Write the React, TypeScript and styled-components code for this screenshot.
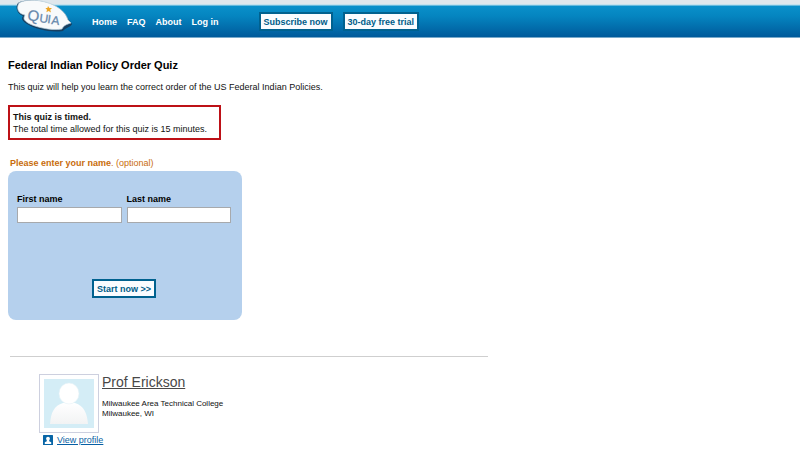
import React from "react";
import styled, { createGlobalStyle } from "styled-components";

const GlobalStyle = createGlobalStyle`
  *, *::before, *::after { box-sizing: border-box; }
  body {
    margin: 0;
    background: #fff;
    color: #111;
    font-family: "Liberation Sans", Arial, Helvetica, sans-serif;
    font-size: 9px;
    line-height: 12px;
  }
`;

const Header = styled.header`
  display: flex;
  align-items: flex-start;
  height: 38px;
  padding-left: 15px;
  border-bottom: 1px solid #78a9ca;
  background: linear-gradient(#dfe7ec 0 4px, #c3e2ee 4px 5px, #0990ca 6px, #0585c0 16px, #005a9b 37px);
`;

const HomeLink = styled.a`
  display: block;
  width: 58px;
  height: 34px;
`;

const Nav = styled.nav`
  display: flex;
  align-items: center;
  gap: 10px;
  height: 19px;
  margin: 12px 0 0 19px;
`;

const NavLink = styled.a`
  color: #fff;
  font-weight: bold;
  text-decoration: none;
`;

const HeaderActions = styled.div`
  display: flex;
  gap: 10px;
  margin: 12px 0 0 40px;
`;

const Button = styled.button`
  height: 19px;
  padding: 0 3px;
  border: 2px solid #00618f;
  background: #fafcff;
  color: #005c89;
  font: bold 9px/12px "Liberation Sans", Arial, sans-serif;
  white-space: nowrap;
  cursor: pointer;
`;

const Main = styled.main`
  padding: 20px 8px 0;
`;

const Title = styled.h1`
  margin: 0;
  color: #000;
  font-size: 11px;
  line-height: 14px;
`;

const Description = styled.p`
  margin: 9px 0 12px;
`;

const TimedNotice = styled.div`
  width: fit-content;
  min-width: 213px;
  padding: 4px 3px 3px;
  border: 2px solid #bd1117;
`;

const NameForm = styled.form`
  max-width: 234px;
  margin-top: 17px;
`;

const Prompt = styled.p`
  margin: 0 0 2px 2px;
  color: #c86c0c;
`;

const Panel = styled.div`
  display: flex;
  flex-direction: column;
  align-items: center;
  padding: 22px 11px 22px 9px;
  border-radius: 8px;
  background: #b5d0ed;
`;

const Fields = styled.div`
  display: grid;
  grid-template-columns: 1fr 1fr;
  gap: 5px;
  width: 100%;
  margin-bottom: 56px;
`;

const Field = styled.label`
  display: flex;
  flex-direction: column;
  gap: 2px;
  color: #000;
  font-weight: bold;
`;

const Input = styled.input`
  width: 100%;
  height: 16px;
  padding: 1px 3px;
  border: 1px solid #a7a9ac;
  background: #fff;
  font: 9px "Liberation Sans", Arial, sans-serif;
`;

const Author = styled.section`
  width: 61%;
  min-width: 300px;
  margin: 36px 0 0 2px;
  padding: 17px 0 0 29px;
  border-top: 1px solid #cfcfcf;
`;

const AuthorRow = styled.div`
  display: flex;
  gap: 3px;
`;

const PhotoFrame = styled.div`
  width: 60px;
  height: 59px;
  padding: 4px;
  border: 1px solid #cdd0df;
`;

const AuthorLink = styled.a`
  display: block;
  margin-bottom: 8px;
  color: #484848;
  font-size: 14px;
  line-height: 17px;
`;

const School = styled.address`
  color: #111;
  font-size: 8px;
  font-style: normal;
  line-height: 10px;
`;

const ProfileLink = styled.a`
  display: flex;
  align-items: center;
  gap: 4px;
  width: fit-content;
  margin: 1px 0 0 4px;
  color: #075fa4;
`;

const Logo = () => (
  <svg width="58" height="34" viewBox="0 0 58 34" role="img" aria-label="Quia">
    <path d="M3 3 C13 -4 46 2 53 19 L57 24 C56 27 50 28 48 31 C36 33 20 29 12 24 C7 21 6 19 8 16 C2 14 0 7 3 3Z" fill="#173f60" />
    <path d="M4 3 C15 -4 48 2 53 20 L56 23 C52 24 48 26 47 29 C36 31 20 27 13 23 C9 20 8 19 10 15 C3 14 1 8 4 3Z" fill="#f8fafb" stroke="#b8cedb" strokeWidth="0.7" />
    <g fill="#5f83a8" stroke="#7896b5" strokeWidth="0.3" fontFamily="Liberation Sans">
      <text x="12" y="20" fontSize="15" transform="rotate(8 12 20)">Q</text>
      <text x="24" y="22" fontSize="12" transform="rotate(8 24 22)">U</text>
      <text x="32" y="23" fontSize="12" transform="rotate(8 32 23)">I</text>
      <text x="36" y="24" fontSize="12" transform="rotate(8 36 24)">A</text>
    </g>
    <path d="M33 6 L34.4 8 L37 8 L35.2 9.8 L36 12.5 L33.6 11 L31.4 12.3 L32 9.8 L30.4 8 L32.4 8Z" fill="#eda525" />
  </svg>
);

const Portrait = () => (
  <svg width="50" height="49" viewBox="0 0 50 49" role="img" aria-label="Prof Erickson">
    <defs>
      <linearGradient id="figure" x1="0" y1="0" x2="0" y2="1">
        <stop offset="0" stopColor="#fff" />
        <stop offset="1" stopColor="#f2f3f4" />
      </linearGradient>
    </defs>
    <path d="M0 0H50V49H0Z" fill="#d4edf6" />
    <path d="M6 45 C7 33 10 27 19 24 H31 C40 27 43 34 44 45Z" fill="url(#figure)" />
    <ellipse cx="25" cy="14.5" rx="10" ry="10.5" fill="#fff" stroke="#e6f2f6" strokeWidth="0.6" />
  </svg>
);

const ProfileIcon = () => (
  <svg width="10" height="10" viewBox="0 0 10 10" aria-hidden="true">
    <rect width="10" height="10" rx="0.5" fill="#0865a6" />
    <circle cx="5" cy="3.6" r="1.9" fill="#fff" />
    <path d="M3.8 4.5h2.4v1.8l2 1V9H1.8V7.3l2-1Z" fill="#fff" />
  </svg>
);

export default function App() {
  return (
    <>
      <GlobalStyle />
      <Header>
        <HomeLink href="#"><Logo /></HomeLink>
        <Nav aria-label="Main">
          <NavLink href="#">Home</NavLink>
          <NavLink href="#">FAQ</NavLink>
          <NavLink href="#">About</NavLink>
          <NavLink href="#">Log in</NavLink>
        </Nav>
        <HeaderActions>
          <Button type="button">Subscribe now</Button>
          <Button type="button">30-day free trial</Button>
        </HeaderActions>
      </Header>
      <Main>
        <Title>Federal Indian Policy Order Quiz</Title>
        <Description>This quiz will help you learn the correct order of the US Federal Indian Policies.</Description>
        <TimedNotice>
          <strong>This quiz is timed.</strong><br />
          The total time allowed for this quiz is 15 minutes.
        </TimedNotice>
        <NameForm onSubmit={(event) => event.preventDefault()}>
          <Prompt><strong>Please enter your name</strong>. (optional)</Prompt>
          <Panel>
            <Fields>
              <Field>First name<Input name="firstName" type="text" /></Field>
              <Field>Last name<Input name="lastName" type="text" /></Field>
            </Fields>
            <Button type="submit">Start now &gt;&gt;</Button>
          </Panel>
        </NameForm>
        <Author>
          <AuthorRow>
            <PhotoFrame><Portrait /></PhotoFrame>
            <div>
              <AuthorLink href="#">Prof Erickson</AuthorLink>
              <School>Milwaukee Area Technical College<br />Milwaukee, WI</School>
            </div>
          </AuthorRow>
          <ProfileLink href="#"><ProfileIcon />View profile</ProfileLink>
        </Author>
      </Main>
    </>
  );
}
